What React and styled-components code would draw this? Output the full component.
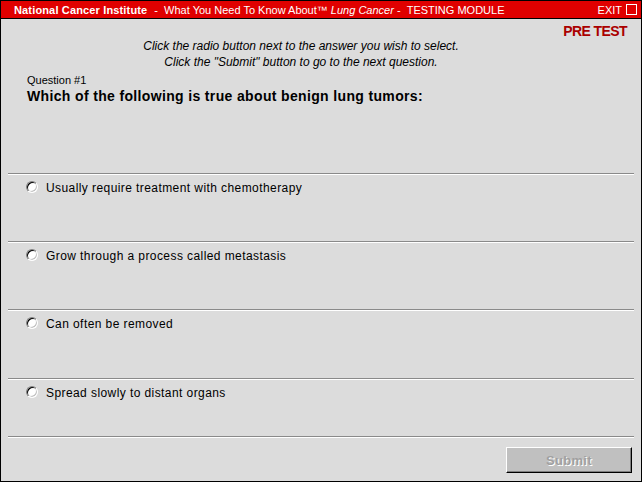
import React from 'react'
import styled, { createGlobalStyle } from 'styled-components'

const GlobalStyle = createGlobalStyle`
  html, body {
    margin: 0;
    padding: 0;
    background: #dcdcdc;
  }
`

const Frame = styled.div`
  width: 642px;
  height: 482px;
  box-sizing: border-box;
  border: 1px solid #000;
  background: #dcdcdc;
  font-family: "Liberation Sans", Arial, sans-serif;
  color: #000;
  display: flex;
  flex-direction: column;
`

const Header = styled.div`
  height: 17px;
  flex-shrink: 0;
  background: #e00000;
  border-bottom: 1px solid #000;
  display: flex;
  align-items: center;
  justify-content: space-between;
  padding: 0 4px 0 13px;
  color: #fff;
  font-size: 11px;
`

const Title = styled.div`
  white-space: nowrap;
`

const Brand = styled.span`
  font-weight: bold;
  letter-spacing: 0.15px;
  margin-right: 7px;
`

const Em = styled.em`
  font-style: italic;
`

const Exit = styled.div`
  display: flex;
  align-items: center;
  gap: 4px;
  font-size: 11px;
`

const ExitBox = styled.span`
  width: 9px;
  height: 9px;
  border: 1px solid #fff;
`

const Top = styled.div`
  position: relative;
  height: 154px;
  flex-shrink: 0;
`

const Mode = styled.div`
  position: absolute;
  top: 3px;
  right: 14px;
  color: #aa0000;
  font-weight: bold;
  font-size: 14px;
  letter-spacing: -0.6px;
  transform: scaleY(1.1);
`

const Instructions = styled.div`
  padding: 19px 40px 0 0;
  text-align: center;
  font-style: italic;
  font-size: 12px;
  line-height: 16px;
`

const QuestionBlock = styled.div`
  padding: 3px 0 0 26px;
`

const QuestionNo = styled.div`
  font-size: 11px;
  line-height: 14px;
`

const QuestionText = styled.div`
  font-size: 14px;
  font-weight: bold;
  letter-spacing: 0.35px;
  line-height: 18px;
`

const Answers = styled.div`
  padding: 0 7px 0 7px;
`

const Row = styled.label`
  display: flex;
  align-items: flex-start;
  gap: 8px;
  height: ${p => p.$h}px;
  box-sizing: border-box;
  padding: 7px 0 0 18px;
  border-top: 1px solid #8a8a8a;
  box-shadow: inset 0 1px 0 #fff;
  font-size: 12px;
  letter-spacing: 0.42px;
  line-height: 14px;
  cursor: pointer;
`

const Radio = styled.span`
  width: 12px;
  height: 12px;
  margin-top: 0;
  box-sizing: border-box;
  border-radius: 50%;
  background: #fff;
  border: 1px solid;
  border-color: #808080 #fff #fff #808080;
  box-shadow: inset 1px 1px 0 #000, inset -1px -1px 0 #c0c0c0;
  flex-shrink: 0;
`

const Footer = styled.div`
  margin: 0 7px;
  border-top: 1px solid #8a8a8a;
  box-shadow: inset 0 1px 0 #fff;
  display: flex;
  justify-content: flex-end;
  padding: 10px 2px 0 0;
`

const SubmitButton = styled.button`
  width: 126px;
  height: 26px;
  box-sizing: border-box;
  background: #c0c0c0;
  border: 1px solid;
  border-color: #fff #000 #000 #fff;
  box-shadow: inset -1px -1px 0 #808080;
  font-family: "Liberation Sans", Arial, sans-serif;
  font-size: 13px;
  font-weight: bold;
  letter-spacing: 0.3px;
  color: #a0a0a0;
  text-shadow: 1px 1px 0 #fff;
  padding: 0;
`

const answers = [
  { text: 'Usually require treatment with chemotherapy', h: 68 },
  { text: 'Grow through a process called metastasis', h: 68 },
  { text: 'Can often be removed', h: 69 },
  { text: 'Spread slowly to distant organs', h: 58 },
]

const App = () => {
  return (
    <>
      <GlobalStyle />
      <Frame>
        <Header>
          <Title>
            <Brand>National Cancer Institute</Brand>- &nbsp;What You Need To Know About™ <Em>Lung Cancer</Em> - &nbsp;TESTING MODULE
          </Title>
          <Exit>
            EXIT <ExitBox />
          </Exit>
        </Header>
        <Top>
          <Mode>PRE TEST</Mode>
          <Instructions>
            Click the radio button next to the answer you wish to select.<br />
            Click the "Submit" button to go to the next question.
          </Instructions>
          <QuestionBlock>
            <QuestionNo>Question #1</QuestionNo>
            <QuestionText>Which of the following is true about benign lung tumors:</QuestionText>
          </QuestionBlock>
        </Top>
        <Answers>
          {answers.map(a => (
            <Row key={a.text} $h={a.h}>
              <Radio />
              {a.text}
            </Row>
          ))}
        </Answers>
        <Footer>
          <SubmitButton disabled>Submit</SubmitButton>
        </Footer>
      </Frame>
    </>
  )
}

export default App
